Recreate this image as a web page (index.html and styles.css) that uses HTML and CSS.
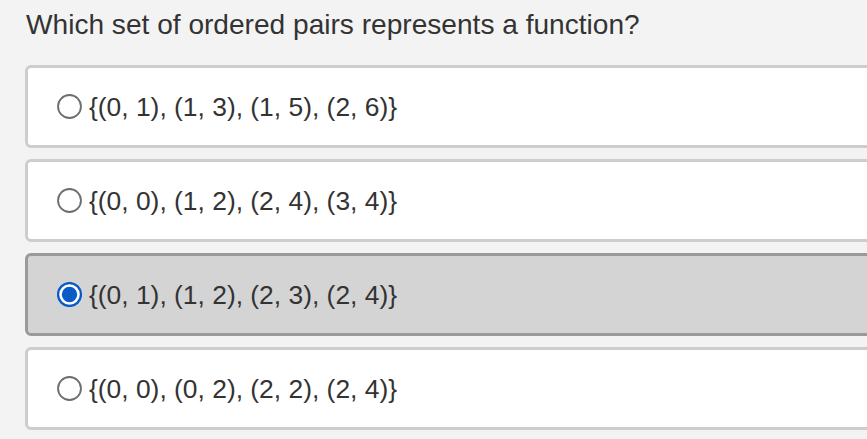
FILE: index.html
```html
<!DOCTYPE html>
<html>
<head>
<meta charset="utf-8">
<link rel="stylesheet" href="styles.css">
</head>
<body>
<div class="page">
  <h1 class="question">Which set of ordered pairs represents a function?</h1>
  <div class="options">
    <label class="option">
      <svg class="radio" viewBox="0 0 24 24"><circle cx="12" cy="12" r="11" fill="#fff" stroke="#6e6e6e" stroke-width="1.8"/></svg>
      <span class="text">{(0, 1), (1, 3), (1, 5), (2, 6)}</span>
    </label>
    <label class="option">
      <svg class="radio" viewBox="0 0 24 24"><circle cx="12" cy="12" r="11" fill="#fff" stroke="#6e6e6e" stroke-width="1.8"/></svg>
      <span class="text">{(0, 0), (1, 2), (2, 4), (3, 4)}</span>
    </label>
    <label class="option selected">
      <svg class="radio" viewBox="0 0 24 24"><circle cx="12" cy="12" r="11" fill="#fff" stroke="#0b5bc6" stroke-width="2.2"/><circle cx="12" cy="12" r="7.4" fill="#0b5bc6"/></svg>
      <span class="text">{(0, 1), (1, 2), (2, 3), (2, 4)}</span>
    </label>
    <label class="option">
      <svg class="radio" viewBox="0 0 24 24"><circle cx="12" cy="12" r="11" fill="#fff" stroke="#6e6e6e" stroke-width="1.8"/></svg>
      <span class="text">{(0, 0), (0, 2), (2, 2), (2, 4)}</span>
    </label>
  </div>
</div>
</body>
</html>
```
FILE: styles.css
```css
html, body {
  margin: 0;
  padding: 0;
  background: #f3f3f3;
  overflow: hidden;
}
.page {
  padding: 11px 0 0 26px;
  font-family: "Liberation Sans", Arial, Helvetica, sans-serif;
  color: #333;
}
.question {
  margin: 0;
  font-size: 28.1px;
  font-weight: normal;
  line-height: 28px;
  color: #333;
}
.options {
  margin-top: 26px;
  margin-left: -1px;
  margin-right: -20px;
  display: flex;
  flex-direction: column;
  gap: 11px;
}
.option {
  box-sizing: border-box;
  height: 83px;
  display: flex;
  align-items: center;
  padding-left: 29px;
  background: #fff;
  border: 3px solid #cdcdcd;
  border-radius: 6px;
}
.option.selected {
  background: #d4d4d4;
  border-color: #9a9a9a;
}
.radio {
  width: 25px;
  height: 25px;
  flex: none;
  margin-right: 7px;
}
.text {
  font-size: 26.4px;
  color: #333;
  line-height: 30px;
}
```
